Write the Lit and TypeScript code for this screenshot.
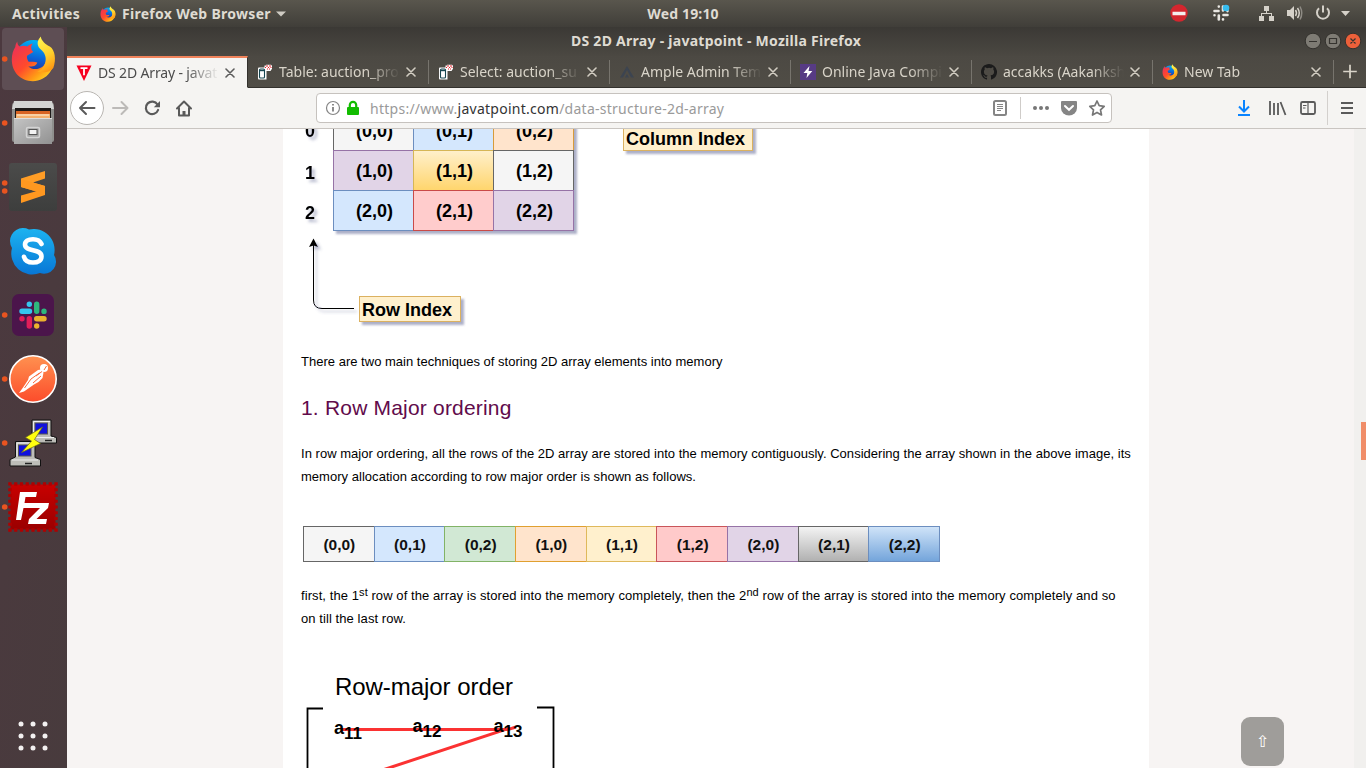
import { LitElement, html, svg, css } from "lit";
import { customElement } from "lit/decorators.js";
import { classMap } from "lit/directives/class-map.js";

/* Firefox globe and flame on a 44x46 grid; id keeps the gradients of each copy apart. */
const firefoxArt = (id: string) => svg`
  <defs>
    <linearGradient id="o${id}" x1="0.1" y1="0.2" x2="0.8" y2="0.9">
      <stop offset="0" stop-color="#f0364f"></stop><stop offset="0.45" stop-color="#ff4a2c"></stop>
      <stop offset="0.8" stop-color="#ff9a16"></stop><stop offset="1" stop-color="#ffc81e"></stop>
    </linearGradient>
    <linearGradient id="y${id}" x1="0.3" y1="0" x2="0.6" y2="1">
      <stop offset="0" stop-color="#fff44f"></stop><stop offset="0.55" stop-color="#ffd02c"></stop><stop offset="1" stop-color="#ff9412"></stop>
    </linearGradient>
    <linearGradient id="b${id}" x1="0.6" y1="0" x2="0.4" y2="1">
      <stop offset="0" stop-color="#00b5f5"></stop><stop offset="0.5" stop-color="#0a63d8"></stop><stop offset="1" stop-color="#32207c"></stop>
    </linearGradient>
  </defs>
  <circle cx="22" cy="22" r="18" fill="url(#b${id})"></circle>
  <path fill="url(#o${id})" d="M6 5.500C6 8 7 10 8.500 10.500C11 9.500 14 9.800 16 10.500C17.500 9 19.500 8 21.500 7.500C19.500 10 19.500 12 20.500 14.200L22 16L16 19.500C15 21 16 23 17 25.500C19 26.500 22 25 26 26.500C25.500 29 22.500 31 17 30.500C22 35 33 34 35 24C36.500 19 35 15 31 11L42.500 20C45 31 36 45.200 21.500 45.200C9 45 0.500 36 0.500 23.500C0.500 18 2 14 4 11C4 9 5 7 6 5.500Z"></path>
  <path fill="url(#y${id})" d="M29.500 0.500C25.500 5 25.500 9 28.500 12.500C33 16 36 21 33.500 28C32 32 29 34.500 26 35.500C34 37 39 36 42 32C45 24 44 14 38.500 10.500C34.500 8.500 30 5 29.500 0.500Z"></path>`;

const firefoxIcon = (id: string) => html`<svg class="ic16" viewBox="0 0 44 46">${firefoxArt(id)}</svg>`;

const adminerIcon = html`<svg class="ic16" viewBox="0 0 16 16">
  <path d="M1.500 3.500h6v-2h1.500v-0.700h5l1 1v3l-1.500 2.200h-4v8.500h-8l-0.500-1v-10z" fill="#fff"></path>
  <rect x="2.500" y="5" width="5" height="9" rx="1" fill="#fff" stroke="#174650" stroke-width="1.100"></rect><path d="M2.500 6.500h5" stroke="#174650" stroke-width="1.400"></path>
  <path d="M8 3.500h1M9 2h2M11 3.500h1M12 2h2M13.500 3.500h1M10 5h1M12 5h1" stroke="#e01a24" stroke-width="1.200" fill="none"></path></svg>`;

const tabs = [
  { label: "DS 2D Array - javat", active: true, icon: html`<svg class="ic16" viewBox="0 0 16 16"><path d="M0.500 0.500H15.500L8 16Z" fill="#f7001f"></path><path d="M4.500 3.200h7M8 3.200v7" stroke="#fff" stroke-width="1.800"></path></svg>` },
  { label: "Table: auction_pro", icon: adminerIcon },
  { label: "Select: auction_su", icon: adminerIcon },
  { label: "Ample Admin Tem", icon: html`<svg class="ic16" viewBox="0 0 16 16"><path d="M1 13.500L8 2L15 13.500H12L8 6L4 13.500ZM6 13.500L8 10L10 13.500Z" fill="#3c4450"></path></svg>` },
  { label: "Online Java Compi", icon: html`<svg class="ic16" viewBox="0 0 16 16"><rect width="16" height="16" fill="#573b84"></rect><path d="M9.500 2L3.500 9H7.300L6.500 14L12.300 7H8.500Z" fill="#fff"></path></svg>` },
  { label: "accakks (Aakanksh", icon: html`<svg class="ic16" viewBox="0 0 16 16"><path fill="#1b1b1b" d="M8 0C3.580 0 0 3.580 0 8c0 3.540 2.290 6.530 5.470 7.590.4.070.55-.17.55-.38v-1.490c-2.230.48-2.700-.94-2.700-.94-.36-.92-.89-1.170-.89-1.170-.73-.5.050-.49.050-.49.8.060 1.230.83 1.230.83.72 1.220 1.870.87 2.330.66.070-.52.28-.87.510-1.070-1.780-.2-3.640-.89-3.640-3.950 0-.87.310-1.590.82-2.150-.08-.2-.36-1.020.08-2.120 0 0 .67-.21 2.200.82a7.700 7.700 0 0 1 4 0c1.530-1.040 2.200-.82 2.200-.82.44 1.100.16 1.920.08 2.120.51.560.82 1.270.82 2.150 0 3.070-1.870 3.750-3.650 3.950.29.250.54.730.54 1.480v2.190c0 .21.150.46.55.38A8 8 0 0 0 8 0Z"></path></svg>` },
  { label: "New Tab", icon: firefoxIcon("tab") },
];

const dockItems = [
  { dots: [59], active: true, art: svg`<g transform="translate(11.300 36)">${firefoxArt("dock")}</g>` },
  { dots: [123], art: svg`
    <defs><linearGradient id="cab" x1="0" y1="0" x2="1" y2="1"><stop offset="0" stop-color="#c4c4c4"></stop><stop offset="1" stop-color="#929292"></stop></linearGradient></defs>
    <rect x="12" y="103" width="42" height="39" rx="2" fill="#8f8f8d"></rect>
    <path d="M14 101H52L54 109H12Z" fill="#d3d3d2"></path><rect x="15" y="108" width="36" height="11" fill="#1e1a19"></rect>
    <path d="M16 111h34v7h-34z" fill="#d86424"></path><path d="M16 114h34v5h-34z" fill="#f4b06e"></path><path d="M17 115h32" stroke="#fff0da"></path>
    <path d="M14 118H52V144H14Z" fill="url(#cab)"></path><path d="M14 118.500H52" stroke="#dedede"></path>
    <rect x="26.500" y="127.500" width="13" height="10" rx="1.500" fill="#a7a7a7" stroke="#d4d4d4" stroke-width="1.500"></rect>
    <rect x="29" y="129.500" width="8" height="5" fill="#f2f2f2" stroke="#555"></rect>` },
  { dots: [183, 191], art: svg`
    <defs><linearGradient id="sub" x1="0" y1="0" x2="0" y2="1"><stop offset="0" stop-color="#4b4b4a"></stop><stop offset="1" stop-color="#3d3e3d"></stop></linearGradient></defs>
    <rect x="9" y="163" width="48" height="48" rx="3" fill="url(#sub)"></rect>
    <path d="M45 171L21 178.500V187L45 194V186L33 182.500L45 178.500Z" fill="#ff9d26"></path>
    <path d="M21 179V187L45 194V186Z" fill="#ff9820"></path><path d="M45 187V195L21 203V195.500L37 191Z" fill="#ff9820"></path>` },
  { dots: [], art: svg`
    <defs><linearGradient id="sky" x1="0" y1="0" x2="0" y2="1"><stop offset="0" stop-color="#1cb3f0"></stop><stop offset="1" stop-color="#0877d6"></stop></linearGradient></defs>
    <path d="M10 241A13 13 0 0 1 29 229.500A21 21 0 0 1 54 255A12 12 0 0 1 40 273A21 21 0 0 1 12 248A13 13 0 0 1 10 241Z" fill="url(#sky)"></path>
    <path d="M41.500 244C40 240.500 37 239.200 33 239.200C28 239.200 25 241.500 25 244.600C25 252.500 41.500 248 41.500 256.500C41.500 260.500 38 262.500 33 262.500C28 262.500 25 260.500 24 256.800" fill="none" stroke="#fff" stroke-width="4.600" stroke-linecap="round"></path>` },
  { dots: [315], art: svg`
    <rect x="12" y="294" width="42" height="42" rx="7" fill="#4b154b"></rect>
    <g stroke-width="5.400" stroke-linecap="round">
      <path d="M22 311.300H29.500M29.300 304.100V304.200" stroke="#36c5f0"></path><path d="M36.700 304.200V311.300M44 311.300V311.400" stroke="#2eb67d"></path>
      <path d="M36.700 318.700H44M36.700 325.900V326" stroke="#ecb22e"></path><path d="M29.300 318.700V326M22 318.700V318.800" stroke="#e01e5a"></path></g>` },
  { dots: [379], art: svg`
    <defs><linearGradient id="pm" x1="0" y1="0" x2="0" y2="1"><stop offset="0" stop-color="#ff9150"></stop><stop offset="1" stop-color="#fc4c2b"></stop></linearGradient></defs>
    <circle cx="33" cy="379" r="23.200" fill="url(#pm)" stroke="#fff" stroke-width="1.600"></circle>
    <circle cx="44" cy="368" r="4" fill="#fff"></circle><path d="M44 370l2.500-4" stroke="#f36c38"></path>
    <path d="M38 370L41 369.500L43.500 372.500L42.500 378L38.500 382L34 384.500L24 391.500L19 393L23 387.500L28 380L29 376.500Z" fill="#fff"></path>
    <path d="M39.500 373L31 379L24.500 388M41 376L33 383M42 371.500L36 376" fill="none" stroke="#fb6a3c" stroke-width="1"></path>` },
  { dots: [443], art: svg`
    <path d="M32 420H51V436L56.500 437.500V443H32Z" fill="#bdbdb8" stroke="#111"></path><rect x="35" y="423" width="12.500" height="11" fill="#1111dc" stroke="#555"></rect><path d="M36 437.500H54M33.500 434V421.500H50" stroke="#eee" fill="none"></path>
    <path d="M15.500 441.500H35V457.500L40.500 459.500V466H10V459.500L15.500 457Z" fill="#bdbdb8" stroke="#111"></path><rect x="18.500" y="445" width="12.500" height="11" fill="#1111dc" stroke="#555"></rect><path d="M12 460H38M17 456.500V443H34" stroke="#eee" fill="none"></path><path d="M25 463.500h7M45 440.500h7" stroke="#222" stroke-width="1.500"></path>
    <path d="M42.500 427L25.500 437.500L31.500 441L21.500 452.500L40.500 443.500L34.500 439.500Z" fill="#ffff10" stroke="#68681a" stroke-width="0.700"></path>` },
  { dots: [507], art: svg`
    <defs><linearGradient id="fz" x1="0" y1="0" x2="0" y2="1"><stop offset="0" stop-color="#c80000"></stop><stop offset="1" stop-color="#9a0000"></stop></linearGradient></defs>
    <rect x="10.500" y="484.500" width="45" height="45" fill="url(#fz)"></rect>
    <rect x="10" y="484" width="46" height="46" fill="none" stroke="#b00000" stroke-width="3.500" stroke-dasharray="3.200 2.550" stroke-dashoffset="1.600"></rect>
    <path d="M20 492H37L36 497H25.500L24.500 503H34.500L33.500 508H23.500L21 520H16Z" fill="#fff"></path>
    <path d="M31 503H49L48 508L36.500 519H47L46 524H28L29 519L40 508H30Z" fill="#fff"></path>` },
];

const cells = [
  ["(0,0)", "grey"], ["(0,1)", "blue"], ["(0,2)", "green"], ["(1,0)", "orange"], ["(1,1)", "yellow"],
  ["(1,2)", "red"], ["(2,0)", "violet"], ["(2,1)", "steel"], ["(2,2)", "azure"],
];

/* Label, fill and border of the 3x3 array, row by row. */
const matrix = [
  ["(0,0)", "#f5f5f5", "#666666"], ["(0,1)", "#d4e7fd", "#6c8ebf"], ["(0,2)", "#ffe4cc", "#d79b3a"],
  ["(1,0)", "#e1d4e7", "#9673a6"], ["(1,1)", "url(#gold)", "#d6b656"], ["(1,2)", "#f5f5f5", "#666666"],
  ["(2,0)", "#d4e7fd", "#6c8ebf"], ["(2,1)", "#ffcccc", "#c94a48"], ["(2,2)", "#e1d4e7", "#9673a6"],
];

@customElement("app-root")
export class AppRoot extends LitElement {
  static styles = css`
    :host { display: block; width: 1366px; height: 768px; overflow: hidden; font-family: "Noto Sans", "Open Sans", sans-serif; }
    * { box-sizing: border-box; }
    svg { display: block; flex: none; }
    .ic16 { width: 16px; height: 16px; }
    .screen { display: grid; grid-template: 27px 741px / 67px 1299px; width: 1366px; height: 768px; }
    .top { grid-column: 1 / 3; display: grid; grid-template-columns: 1fr auto 1fr; align-items: center; background: linear-gradient(#59564d, #403e39); color: #dfdbd2; font-weight: 700; font-size: 14px; line-height: 25px; white-space: nowrap; }
    .left, .right { display: flex; align-items: center; }
    .left { padding-left: 12px; }
    .activities { width: 88px; padding-bottom: 1px; letter-spacing: 0.300px; }
    .appname { margin-left: 6px; width: 150px; padding-bottom: 1px; letter-spacing: 0.290px; }
    .clock { padding-bottom: 1px; letter-spacing: 0.150px; }
    .caret { margin-left: 4px; }
    .right { justify-content: flex-end; }
    .dock { background: linear-gradient(100deg, #4c393f, #483b3d); display: flex; flex-direction: column; justify-content: space-between; }
    .win { display: grid; grid-template-rows: 29px 32px 41px 639px; min-width: 0; }
    .title { display: grid; grid-template-columns: 1fr auto 1fr; align-items: center; background: linear-gradient(#3b3935, #4b4842); color: #dfdbd2; font-weight: 700; font-size: 14px; line-height: 26px; }
    .name { grid-column: 2; letter-spacing: 0.270px; padding: 0 1px 1px 0; }
    .buttons { justify-self: end; }
    .tabs { display: flex; background: linear-gradient(#4c4943, #504d46); }
    .tab { display: flex; align-items: center; width: 181px; height: 32px; padding-left: 9px; color: #d9d4c9; font-size: 14px; line-height: 31px; border-bottom: 1px solid #33312d; background: linear-gradient(#77746d, #77746d) right 0 top 4px / 1px 24px no-repeat; }
    .tab.active { background: #f5f4f2; color: #4c4c4c; border-bottom-color: #f5f4f2; border-top: 2px solid #f0835b; border-right: 1px solid #33312d; line-height: 28px; }
    .label { width: 121px; margin: 0 6px; overflow: hidden; white-space: nowrap; mask-image: linear-gradient(90deg, #000 88px, transparent 121px); }
    .active .label { letter-spacing: -0.150px; }
    .x { width: 10px; height: 10px; }
    .plus { width: 32px; height: 32px; border-bottom: 1px solid #33312d; }
    .nav { display: flex; align-items: center; background: #f5f4f2; border-bottom: 1px solid #c9c5c1; padding-left: 3px; }
    .field { display: flex; align-items: center; width: 796px; height: 30px; margin: 0 115px 0 116px; border: 1px solid #c6c2be; border-radius: 4px; background: #fff; }
    .url { width: 620px; margin-left: 1px; padding-top: 1px; font-size: 14px; letter-spacing: 0.260px; line-height: 27px; color: #9a9a9a; white-space: nowrap; }
    .host { color: #333; }
    .view { display: grid; grid-template-columns: 1287px 12px; position: relative; overflow: hidden; }
    .page { background: #f7f4f3; padding-left: 216px; height: 639px; overflow: hidden; }
    .bar { background: #f1f0ee; padding: 293px 0 0 7px; }
    .thumb { width: 5px; height: 38px; background: #f08d68; }
    .column { width: 866px; height: 639px; background: #fff; overflow: hidden; font-family: "Liberation Sans", Arial, sans-serif; color: #000; }
    p { margin: 0 0 0 18px; font-size: 13px; line-height: 23px; width: 836px; white-space: nowrap; }
    .intro { letter-spacing: 0.014px; }
    .about { letter-spacing: 0.029px; }
    .steps { letter-spacing: 0.080px; }
    h2 { margin: 22px 0 22px 18px; font-size: 21px; letter-spacing: 0.190px; line-height: 25px; font-weight: 400; color: #610b4b; }
    sup { font-size: 11px; line-height: 0; vertical-align: 4px; }
    .array { display: flex; margin: 38px 0 22px 20px; width: 637px; height: 36px; border-right: 1px solid #6c8ebf; }
    .cell { flex: 1; border: 1px solid; border-right: 0; text-align: center; font-weight: 700; font-size: 15.500px; line-height: 35px; }
    .cell span { color: #111; padding-left: 1px; }
    .grey { background: #f5f5f5; border-color: #666; }
    .blue { background: #d4e7fd; border-color: #6c8ebf; }
    .green { background: #d1e8d4; border-color: #82b366; }
    .orange { background: #ffe4cc; border-color: #e0a030; }
    .yellow { background: #fff0cd; border-color: #dfb95c; }
    .red { background: #ffcaca; border-color: #c9555a; }
    .violet { background: #e1d4e7; border-color: #9673a6; }
    .steel { background: linear-gradient(#f3f3f3, #b1b1b1); border-color: #666; }
    .azure { background: linear-gradient(#cfe3f8, #74a5db); border-color: #6c8ebf; }
    .up { position: absolute; left: 1174px; top: 588px; width: 43px; height: 49px; border-radius: 9px; background: #9f9d9a; color: #fff; font: 16px/49px "DejaVu Sans", sans-serif; text-align: center; }
    .b { font-family: "Liberation Sans", sans-serif; font-weight: 700; font-size: 18px; }
    .n { font-family: "Liberation Sans", sans-serif; font-size: 24px; }
  `;

  private dock() {
    return html`<nav class="dock"><div>
      ${dockItems.map((d, i) => html`<svg width="67" height="64" viewBox="0 ${27 + i * 64} 67 64">
        ${d.active ? svg`<rect x="2" y="28" width="62" height="62" rx="4" fill="#5e4e54"></rect>` : ""}
        ${d.art}${d.dots.map((y) => svg`<circle cx="4.700" cy=${y} r="2.800" fill="#e95420"></circle>`)}</svg>`)}
      </div>
      <svg width="67" height="64" viewBox="0 704 67 64">${[724, 736, 748].map((y) => [21, 33, 45].map((x) => svg`<circle cx=${x} cy=${y} r="2.500" fill="#f2f0f0"></circle>`))}</svg>
    </nav>`;
  }

  private top() {
    return html`<header class="top">
      <div class="left"><span class="activities">Activities</span>${firefoxIcon("top")}<span class="appname">Firefox Web Browser</span>
        <svg class="caret" width="10" height="6" viewBox="0 0 10 6"><path d="M0 0.500h10l-5 5z" fill="#cfcbc3"></path></svg></div>
      <span class="clock">Wed 19:10</span>
      <div class="right"><svg width="200" height="27" viewBox="1166 0 200 27">
        <circle cx="1179" cy="13" r="8.700" fill="#d3262e"></circle><path d="M1172.500 13.500h13" stroke="#f5eeee" stroke-width="3.500"></path>
        <g stroke="#e9e7e2" stroke-width="2.600" stroke-linecap="round"><path d="M1214.500 11h4M1218.800 6.500v0.100M1223 6.500v4M1223.500 15h4M1223 19.300v0.100M1218.800 15.500v4M1214.500 15.200v0.100M1227.500 11v0.100"></path></g>
        <circle cx="1226" cy="8" r="3.300" fill="#36bdf0"></circle>
        <g fill="#d5d1c9"><path d="M1264 6h5v5h-5zM1259 16h5v5h-5zM1269 16h5v5h-5z"></path><path d="M1266 11h1v2h5v3h-1v-2h-9v2h-1v-3h5z"></path>
        <path d="M1287 10h3l4-4v14l-4-4h-3zM1341 11h9l-4.500 5z"></path></g>
        <g fill="none" stroke="#d5d1c9"><path d="M1295.500 10q2 3 0 6" stroke-width="1.500"></path><path d="M1297.500 8q3.500 5 0 10" stroke-width="1.500"></path><path d="M1300 6.500q3.500 6.500 0 13" stroke="#8e8b84" stroke-width="1.500"></path>
        <path d="M1319 8.200a6 6 0 1 0 8 0M1323 5.500v7" stroke-width="2"></path></g></svg></div>
    </header>`;
  }

  private browser() {
    return html`<div class="title"><span class="name">DS 2D Array - javatpoint - Mozilla Firefox</span>
      <svg class="buttons" width="66" height="29" viewBox="1300 27 66 29">
        <g stroke="#33312d"><circle cx="1313" cy="41" r="7.800" fill="#7e7b74"></circle><circle cx="1333" cy="41" r="7.800" fill="#7e7b74"></circle><circle cx="1353" cy="41" r="7.800" fill="#ec603a"></circle></g>
        <path d="M1309 41.500h8M1329.500 38.500h7v5h-7zM1350.500 38.500l5 5m0-5l-5 5" fill="none" stroke="#35332f" stroke-width="1.200"></path></svg></div>
      <div class="tabs">${tabs.map((t) => html`<div class=${classMap({ tab: true, active: !!t.active })}>${t.icon}<span class="label">${t.label}</span>
        <svg class="x" viewBox="0 0 10 10"><path d="M1 1l8 8M9 1l-8 8" stroke=${t.active ? "#5c5c5c" : "#d2cdc2"} stroke-width="1.600" stroke-linecap="round"></path></svg></div>`)}
        <svg class="plus" viewBox="0 0 32 32"><path d="M16 9v14M9 16h14" stroke="#d9d4c9" stroke-width="1.800"></path></svg></div>
      ${this.nav()}`;
  }

  private nav() {
    return html`<div class="nav">
      <svg width="130" height="40" viewBox="70 88 130 40" fill="none" stroke="#5a5a5a" stroke-width="2" stroke-linecap="round" stroke-linejoin="round">
        <circle cx="87" cy="108" r="16.500" fill="#fff" stroke="#b9b6b2" stroke-width="1"></circle>
        <path d="M94.500 108H80M86 102l-6 6l6 6"></path><path d="M113 108h14.500M121.500 102l6 6l-6 6" stroke="#bcbab8"></path>
        <path d="M157.500 104.500a6.300 6.300 0 1 0 0.600 5.500" stroke-width="2.200"></path><path d="M160 101v6.200h-6.200z" fill="#5a5a5a" stroke="none"></path>
        <path d="M177 108.500l7-7l7 7M179 108v7.500h10v-7.500" ></path><path d="M184 115v-4" stroke-width="3" stroke-linecap="butt"></path></svg>
      <div class="field">
        <svg width="52" height="28" viewBox="317 94 52 28"><circle cx="333" cy="108" r="6.500" fill="none" stroke="#858585" stroke-width="1.200"></circle><path d="M333 107v4.500M333 104v1.600" stroke="#777" stroke-width="1.700"></path>
          <rect x="347" y="107" width="12" height="8" rx="1" fill="#12bc00"></rect><path d="M349.800 108v-3a3.200 3.200 0 0 1 6.400 0v3" fill="none" stroke="#12bc00" stroke-width="2.200"></path></svg>
        <span class="url">https://www.<span class="host">javatpoint.com</span>/data-structure-2d-array</span>
        <svg width="121" height="28" viewBox="990 94 121 28"><rect x="994" y="101" width="12" height="14" rx="1.500" fill="none" stroke="#858585" stroke-width="2"></rect><path d="M997 104.500h6M997 106.500h6M997 108.500h6M997 110.500h4" stroke="#858585"></path>
          <path d="M1020.500 97v22" stroke="#cfccc9"></path><g fill="#777"><circle cx="1035" cy="108" r="2"></circle><circle cx="1041" cy="108" r="2"></circle><circle cx="1047" cy="108" r="2"></circle></g>
          <path d="M1062 101h14q1 0 1 1v6a8 7.500 0 0 1-16 0v-6q0-1 1-1z" fill="#858585"></path><path d="M1065 106l4 3.800l4-3.800" fill="none" stroke="#fff" stroke-width="2" stroke-linecap="round"></path>
          <path d="M1097 101l2.200 4.700l5 .6l-3.700 3.500l1 5.200l-4.500-2.600l-4.500 2.600l1-5.200l-3.700-3.500l5-.6z" fill="none" stroke="#777" stroke-width="1.700" stroke-linejoin="round"></path></svg>
      </div>
      <svg width="139" height="40" viewBox="1227 88 139 40" fill="none" stroke="#5a5a5a" stroke-width="2"><path d="M1244 100v11M1239 106.500l5 5l5-5M1238 115h12" stroke="#0a84ff"></path>
        <path d="M1270 101v14M1274 103v12M1278 103v12M1280.500 102l5 13" stroke-width="1.800"></path><rect x="1301" y="102" width="14" height="12" rx="1.500" stroke-width="1.800"></rect><path d="M1308 102v12M1303 105.500h3.500M1303 108h2.500" stroke-width="1.200"></path>
        <path d="M1327.500 91v34" stroke="#d3d0cd" stroke-width="1"></path><path d="M1341 103h12M1341 108h12M1341 113h12"></path></svg>
    </div>`;
  }

  private figure() {
    return svg`<defs><linearGradient id="gold" x1="0" y1="0" x2="0" y2="1"><stop offset="0" stop-color="#fff0cc"></stop><stop offset="1" stop-color="#ffd56c"></stop></linearGradient>
        <filter id="sh" x="-20%" y="-20%" width="150%" height="150%"><feDropShadow dx="3" dy="3" stdDeviation="1.200" flood-color="#5a6090" flood-opacity="0.500"></feDropShadow></filter>
        <filter id="soft" x="-50%" y="-20%" width="200%" height="150%"><feDropShadow dx="3" dy="3" stdDeviation="1.500" flood-color="#5a6090" flood-opacity="0.450"></feDropShadow></filter></defs>
      <g filter="url(#sh)"><rect x="333" y="110" width="241" height="121" fill="#fff"></rect></g>
      ${matrix.map((m, i) => svg`<rect x=${333.5 + (i % 3) * 80} y=${110.5 + Math.floor(i / 3) * 40} width="80" height="40" fill=${m[1]} stroke=${m[2]}></rect>
        <text class="b" x=${374.5 + (i % 3) * 80} y=${137 + Math.floor(i / 3) * 40} text-anchor="middle">${m[0]}</text>`)}
      <g filter="url(#soft)"><text class="b" x="305" y="137">0</text><text class="b" x="305" y="179">1</text><text class="b" x="305" y="219">2</text>
        <path d="M354 308.500H322Q313.500 308.500 313.500 300V245" fill="none" stroke="#000"></path><path d="M313.500 238.500L318 247L313.500 245.500L309 247Z"></path></g>
      <g filter="url(#sh)"><rect x="359.500" y="296.500" width="101" height="25" fill="#fff0cd" stroke="#dbb160"></rect><rect x="623.500" y="120.500" width="129" height="30" fill="#fff0cd" stroke="#dbb160"></rect></g>
      <text class="b" x="362" y="316">Row Index</text><text class="b" x="626" y="145">Column Index</text>`;
  }

  private order() {
    return svg`<text class="n" x="335" y="695" textLength="178">Row-major order</text>
      <g fill="none" stroke="#fb3232" stroke-width="3"><path d="M341 729.500H508L516 727M510 728L384 769.500"></path></g>
      <path d="M323 708.500H307.500V768M537 707.500H553.500V768" fill="none" stroke="#000" stroke-width="1.800"></path>
      ${[["11", 334, 734], ["12", 412.5, 732], ["13", 493.5, 732]].map(([s, x, y]) => svg`<text class="b" x=${x} y=${y}>a<tspan dy="5" font-size="17">${s}</tspan></text>`)}`;
  }

  render() {
    return html`<div class="screen">${this.top()}${this.dock()}
      <main class="win">${this.browser()}
        <div class="view"><div class="page"><article class="column">
          <svg width="866" height="221" viewBox="283 129 866 221">${this.figure()}</svg>
          <p class="intro">There are two main techniques of storing 2D array elements into memory</p>
          <h2>1. Row Major ordering</h2>
          <p class="about">In row major ordering, all the rows of the 2D array are stored into the memory contiguously. Considering the array shown in the above image, its<br>memory allocation according to row major order is shown as follows.</p>
          <div class="array">${cells.map(([t, c]) => html`<div class="cell ${c}"><span>${t}</span></div>`)}</div>
          <p class="steps">first, the 1<sup>st</sup> row of the array is stored into the memory completely, then the 2<sup>nd</sup> row of the array is stored into the memory completely and so<br>on till the last row.</p>
          <svg width="866" height="138" viewBox="283 630 866 138">${this.order()}</svg>
        </article></div><div class="bar"><div class="thumb"></div></div><div class="up">⇧</div></div>
      </main></div>`;
  }
}
